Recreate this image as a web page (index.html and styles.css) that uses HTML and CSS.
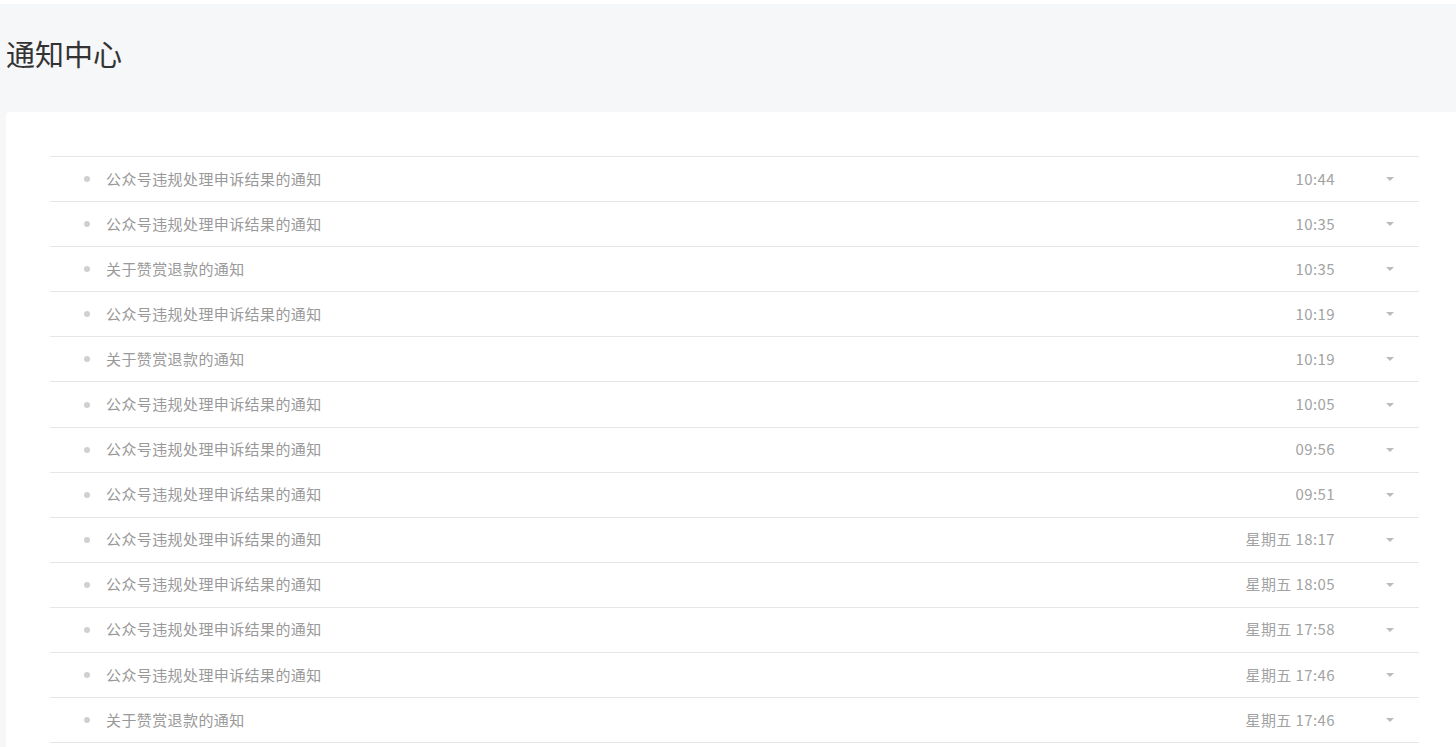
FILE: index.html
```html
<!doctype html>
<html lang="zh-CN">
<head>
    <meta charset="UTF-8">
    <meta name="viewport" content="width=device-width, initial-scale=1.0">
    <title>通知中心</title>
    <link rel="stylesheet" href="styles.css">
</head>
<body>
    <div id="page">
        <div class="head">
            <h1 class="title">通知中心</h1>
        </div>
        <div class="card">
            <ul class="list">
                <li class="row"><i class="dot"></i><span class="name">公众号违规处理申诉结果的通知</span><span class="time">10:44</span><i class="caret"></i></li>
                <li class="row"><i class="dot"></i><span class="name">公众号违规处理申诉结果的通知</span><span class="time">10:35</span><i class="caret"></i></li>
                <li class="row"><i class="dot"></i><span class="name">关于赞赏退款的通知</span><span class="time">10:35</span><i class="caret"></i></li>
                <li class="row"><i class="dot"></i><span class="name">公众号违规处理申诉结果的通知</span><span class="time">10:19</span><i class="caret"></i></li>
                <li class="row"><i class="dot"></i><span class="name">关于赞赏退款的通知</span><span class="time">10:19</span><i class="caret"></i></li>
                <li class="row"><i class="dot"></i><span class="name">公众号违规处理申诉结果的通知</span><span class="time">10:05</span><i class="caret"></i></li>
                <li class="row"><i class="dot"></i><span class="name">公众号违规处理申诉结果的通知</span><span class="time">09:56</span><i class="caret"></i></li>
                <li class="row"><i class="dot"></i><span class="name">公众号违规处理申诉结果的通知</span><span class="time">09:51</span><i class="caret"></i></li>
                <li class="row"><i class="dot"></i><span class="name">公众号违规处理申诉结果的通知</span><span class="time">星期五 18:17</span><i class="caret"></i></li>
                <li class="row"><i class="dot"></i><span class="name">公众号违规处理申诉结果的通知</span><span class="time">星期五 18:05</span><i class="caret"></i></li>
                <li class="row"><i class="dot"></i><span class="name">公众号违规处理申诉结果的通知</span><span class="time">星期五 17:58</span><i class="caret"></i></li>
                <li class="row"><i class="dot"></i><span class="name">公众号违规处理申诉结果的通知</span><span class="time">星期五 17:46</span><i class="caret"></i></li>
                <li class="row"><i class="dot"></i><span class="name">关于赞赏退款的通知</span><span class="time">星期五 17:46</span><i class="caret"></i></li>
            </ul>
        </div>
    </div>
</body>
</html>
```

FILE: styles.css
```css
*{
    margin: 0;
    padding: 0;
    list-style: none;
    box-sizing: border-box;
}
html, body{
    background-color: #fff;
    font-family: "Noto Sans CJK SC", "Noto Sans", sans-serif;
}
#page{
    margin-top: 4px;
    min-height: 743px;
    background-color: #f6f7f9;
}
.head{
    height: 108px;
    padding: 30px 0 0 6px;
}
.title{
    font-size: 29px;
    font-weight: normal;
    line-height: 38px;
    color: #333;
}
.card{
    margin-left: 6px;
    min-height: 640px;
    padding: 44px 37px 0 44px;
    background-color: #fff;
    border-radius: 4px 0 0 0;
}
.list{
    border-bottom: 1px solid #e6e6e6;
}
.row{
    height: 45.1px;
    padding-bottom: 2px;
    display: flex;
    align-items: center;
    border-top: 1px solid #e6e6e6;
    font-size: 15px;
    letter-spacing: 0.4px;
    color: #999;
}
.dot{
    width: 6px;
    height: 6px;
    margin: 2px 16px 0 34px;
    border-radius: 50%;
    background-color: #d0d0d0;
}
.name{
    flex: 1;
}
.time{
    color: #a3a3a3;
}
.caret{
    width: 0;
    height: 0;
    margin: 2px 25px 0 51px;
    border-left: 4px solid transparent;
    border-right: 4px solid transparent;
    border-top: 4px solid #bbb;
}
```
